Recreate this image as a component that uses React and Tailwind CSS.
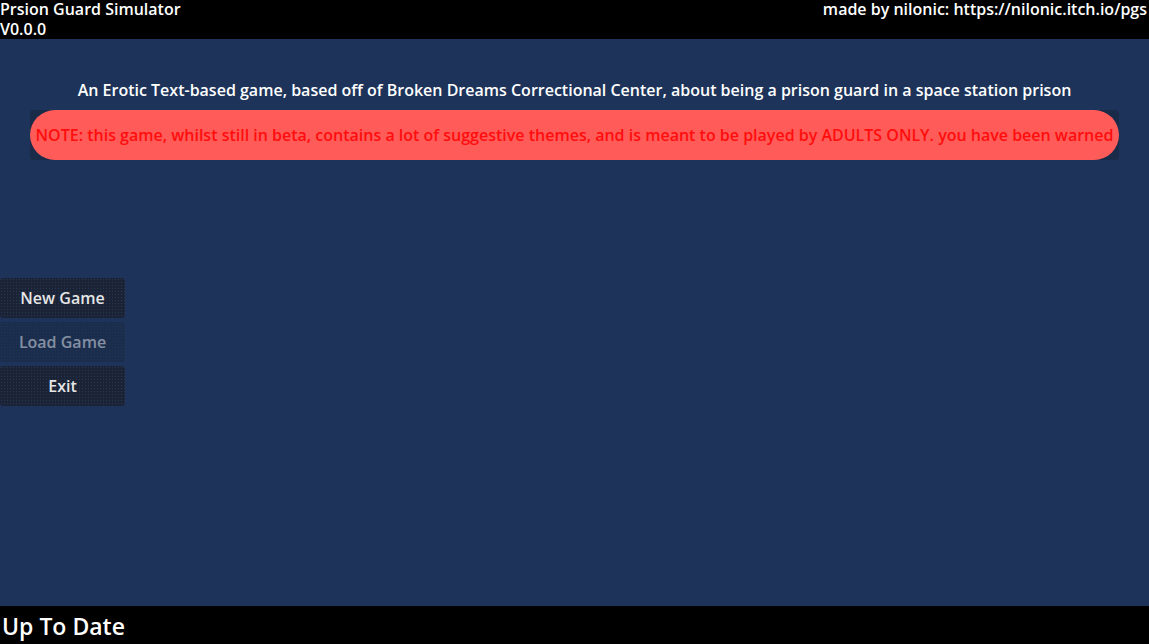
const Button = ({ label, disabled }) => {
  return (
    <button
      disabled={disabled}
      className={
        "w-[125px] h-[40px] rounded-[3px] bg-[#1a2436] bg-[radial-gradient(#2a3550_0.6px,transparent_0.8px)] bg-[length:3px_3px] text-base font-semibold " +
        (disabled ? "opacity-60 text-[#c8ccd4] bg-[#1b2a45]" : "text-[#e6e6e6]")
      }
    >
      {label}
    </button>
  );
};

const App = () => {
  return (
    <div
      className="w-[1149px] h-[644px] flex flex-col bg-[#1d3359] overflow-hidden"
      style={{ fontFamily: '"Open Sans", "Noto Sans", sans-serif' }}
    >
      {/* top bar */}
      <div className="h-[39px] bg-black text-white text-base font-semibold flex justify-between shrink-0">
        <div className="leading-[20px] -mt-[1px]">
          <div>Prsion Guard Simulator</div>
          <div>V0.0.0</div>
        </div>
        <div className="leading-[20px] -mt-[1px] pr-[2px]">
          made by nilonic: https://nilonic.itch.io/pgs
        </div>
      </div>

      <div className="flex-1 flex flex-col">
        <p className="text-white text-base font-semibold text-center mt-[40px] leading-[22px]">
          An Erotic Text-based game, based off of Broken Dreams Correctional
          Center, about being a prison guard in a space station prison
        </p>

        <div className="mx-[30px] mt-[9px] h-[50px] rounded-[4px] bg-[#1a2b4a] flex">
          <div className="flex-1 rounded-full bg-[#ff5b59] flex items-center justify-center">
            <span className="text-[#ff0d0d] text-base font-semibold whitespace-nowrap">
              NOTE: this game, whilst still in beta, contains a lot of
              suggestive themes, and is meant to be played by ADULTS ONLY. you
              have been warned
            </span>
          </div>
        </div>

        <div className="mt-[118px] flex flex-col gap-[4px]">
          <Button label="New Game" />
          <Button label="Load Game" disabled />
          <Button label="Exit" />
        </div>
      </div>

      {/* bottom bar */}
      <div className="h-[38px] bg-black text-white text-[23px] font-semibold leading-[40px] pl-[2px] shrink-0">
        Up To Date
      </div>
    </div>
  );
};

export default App;
